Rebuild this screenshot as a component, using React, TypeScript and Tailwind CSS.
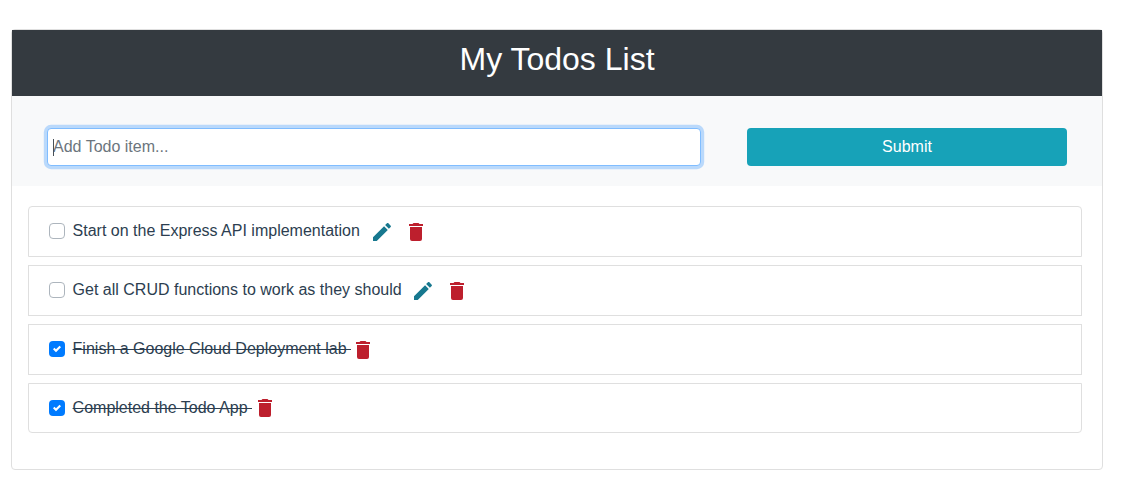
import React, { useState } from "react";

type Todo = { id: number; title: string; done: boolean };

const initialTodos: Todo[] = [
  { id: 1, title: "Start on the Express API implementation", done: false },
  { id: 2, title: "Get all CRUD functions to work as they should", done: false },
  { id: 3, title: "Finish a Google Cloud Deployment lab", done: true },
  { id: 4, title: "Completed the Todo App", done: true },
];

function PencilIcon() {
  return (
    <svg viewBox="0 0 24 24" className="size-6" fill="#17788f">
      <path d="M20.71,7.04C21.1,6.65 21.1,6 20.71,5.63L18.37,3.29C18,2.9 17.35,2.9 16.96,3.29L15.12,5.12L18.87,8.87M3,17.25V21H6.75L17.81,9.93L14.06,6.18L3,17.25Z" />
    </svg>
  );
}

function TrashIcon() {
  return (
    <svg viewBox="0 0 24 24" className="size-6" fill="#bd1f2d">
      <path d="M19,4H15.5L14.5,3H9.5L8.5,4H5V6H19M6,19A2,2 0 0,0 8,21H16A2,2 0 0,0 18,19V7H6V19Z" />
    </svg>
  );
}

function Checkbox({ checked, onToggle }: { checked: boolean; onToggle: () => void }) {
  return (
    <button
      type="button"
      role="checkbox"
      aria-checked={checked}
      onClick={onToggle}
      className={
        checked
          ? "-mt-px flex size-4 shrink-0 items-center justify-center rounded bg-[#007bff]"
          : "-mt-px size-4 shrink-0 rounded border border-[#adb5bd] bg-white"
      }
    >
      {checked && (
        <svg viewBox="0 0 8 8" className="size-2" fill="#fff">
          <path d="M6.564.75l-3.59 3.612-1.538-1.55L0 4.26l2.974 2.99L8 2.193z" />
        </svg>
      )}
    </button>
  );
}

function TodoRow({ todo, onToggle, onDelete }: { todo: Todo; onToggle: () => void; onDelete: () => void }) {
  return (
    <li className="group flex h-[51px] items-center border border-[#dfdfdf] bg-white pl-5 first:rounded-t last:h-[50px] last:rounded-b">
      <Checkbox checked={todo.done} onToggle={onToggle} />
      <span
        className={
          todo.done
            ? "-mt-px ml-[7.6px] whitespace-pre leading-6 line-through"
            : "-mt-0.5 ml-[7.6px] whitespace-pre leading-6"
        }
      >
        {todo.done ? todo.title + " " : todo.title}
      </span>
      {!todo.done && (
        <button type="button" aria-label="Edit" className="ml-[9.8px] mr-2.5">
          <PencilIcon />
        </button>
      )}
      <button
        type="button"
        aria-label="Delete"
        onClick={onDelete}
        className={todo.done ? "ml-[0.3px] group-last:ml-[0.8px]" : ""}
      >
        <TrashIcon />
      </button>
    </li>
  );
}

export default function App() {
  const [todos, setTodos] = useState(initialTodos);
  const [text, setText] = useState("");

  const submit = (e: React.FormEvent) => {
    e.preventDefault();
    if (!text.trim()) return;
    setTodos([...todos, { id: Date.now(), title: text.trim(), done: false }]);
    setText("");
  };

  return (
    <div className="min-h-[496px] bg-white pt-[29px] pr-5 pl-[11px] font-['Liberation_Sans',Arial,sans-serif] text-base text-[#2c3e50]">
      <div className="flex min-h-[441px] flex-col rounded border border-[#dfdfdf] bg-white">
        <header className="h-[66px] bg-[#343a40] pt-[10px] text-center">
          <h1 className="text-[32px] leading-[38px] text-white">My Todos List</h1>
        </header>
        <form onSubmit={submit} className="flex h-[90px] items-start bg-[#f8f9fa] px-[35px] pt-8">
          <div className="relative flex-1">
            <input
              value={text}
              onChange={(e) => setText(e.target.value)}
              placeholder="Add Todo item..."
              className="block h-[38px] w-full rounded border border-[#80bdff] bg-white px-[5px] text-[#495057] shadow-[0_0_0_3.2px_rgba(0,123,255,0.25)] outline-none placeholder:text-[#6c757d]"
            />
            {!text && <span className="absolute top-[11px] left-1.5 h-[17px] w-px bg-[#495057]" />}
          </div>
          <button type="submit" className="ml-[46px] h-[38px] w-80 rounded bg-[#17a2b8] text-white">
            Submit
          </button>
        </form>
        <ul className="flex flex-col gap-2 pt-5 pr-5 pl-4">
          {todos.map((todo) => (
            <TodoRow
              key={todo.id}
              todo={todo}
              onToggle={() => setTodos(todos.map((t) => (t.id === todo.id ? { ...t, done: !t.done } : t)))}
              onDelete={() => setTodos(todos.filter((t) => t.id !== todo.id))}
            />
          ))}
        </ul>
      </div>
    </div>
  );
}
